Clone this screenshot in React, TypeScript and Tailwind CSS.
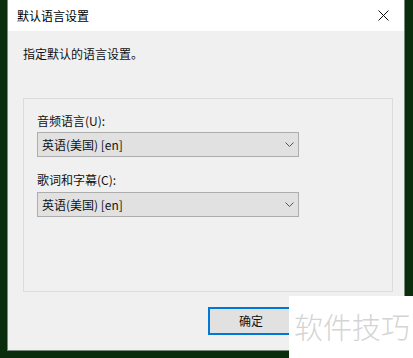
import React from 'react';

const font = { fontFamily: '"Microsoft YaHei UI", "Noto Sans CJK SC", "Liberation Sans", sans-serif' };

const Chevron = () => (
  <svg width="9" height="5" viewBox="0 0 9 5" className="shrink-0">
    <path d="M0.5 0.5 L4.5 4.5 L8.5 0.5" fill="none" stroke="#555" strokeWidth="1" />
  </svg>
);

const Select: React.FC<{ value: string }> = ({ value }) => (
  <div className="h-[25px] w-[262px] flex items-center justify-between pl-[4px] pr-[4px] bg-[#e1e1e1] border border-[#adadad] text-[12px] text-[#111]">
    <span>{value}</span>
    <Chevron />
  </div>
);

export default function App() {
  return (
    <div className="relative w-[413px] h-[358px] bg-[#0a2e0d] overflow-hidden" style={font}>
      {/* Dialog */}
      <div className="ml-[7px] w-[398px] h-[351px] flex flex-col bg-[#f0f0f0] border-x border-b border-[#7a8a7a]">
        {/* Title bar */}
        <div className="h-[31px] bg-white flex items-center justify-between pl-[9px] pr-[15px]">
          <span className="text-[12px] text-black">默认语言设置</span>
          <svg width="11" height="11" viewBox="0 0 11 11">
            <path d="M0.5 0.5 L10.5 10.5 M10.5 0.5 L0.5 10.5" stroke="#111" strokeWidth="1" />
          </svg>
        </div>

        <div className="pl-[15px] pt-[14px] text-[12px] text-[#111]">指定默认的语言设置。</div>

        {/* Group box */}
        <div className="ml-[15px] mt-[35px] w-[370px] h-[194px] border border-[#dcdcdc] pl-[13px] pt-[14px]">
          <div className="text-[12px] text-[#111] leading-[16px]">音频语言(U):</div>
          <div className="mt-[3px]">
            <Select value="英语(美国) [en]" />
          </div>
          <div className="mt-[15px] text-[12px] text-[#111] leading-[16px]">歌词和字幕(C):</div>
          <div className="mt-[4px]">
            <Select value="英语(美国) [en]" />
          </div>
        </div>

        {/* Buttons */}
        <div className="mt-[15px] ml-[200px]">
          <button className="w-[86px] h-[28px] bg-[#e1e1e1] border-2 border-[#0078d7] text-[12px] text-[#111]">
            确定
          </button>
        </div>
      </div>

      {/* Watermark */}
      <div className="absolute left-[289px] top-[296px] w-[124px] h-[62px] bg-white flex items-center justify-center pl-[2px]">
        <span className="text-[29px] text-[#d4d4d4]" style={{ fontFamily: '"Noto Sans CJK SC", sans-serif', fontWeight: 300 }}>
          软件技巧
        </span>
      </div>
    </div>
  );
}
